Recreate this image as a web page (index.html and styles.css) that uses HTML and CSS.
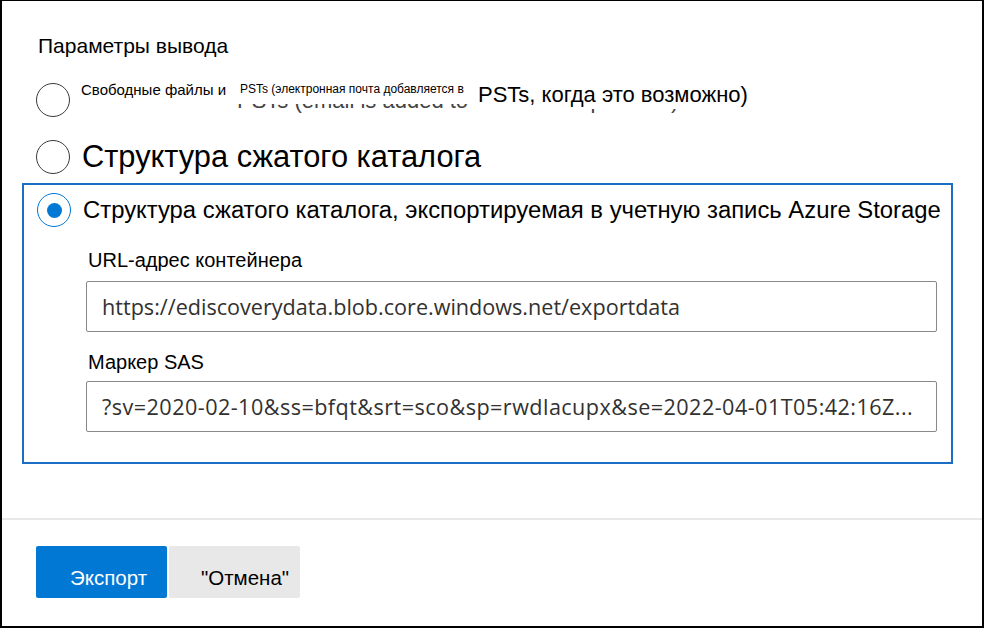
FILE: index.html
```html
<!DOCTYPE html>
<html lang="ru">
<head>
<meta charset="utf-8">
<title>Параметры вывода</title>
<link rel="stylesheet" href="styles.css">
</head>
<body>
<div class="dialog">
  <div class="content">
    <div class="heading">Параметры вывода</div>

    <div class="option opt1">
      <span class="radio"></span>
      <div class="opt1-label">
        <span class="t-small">Свободные файлы и</span>
        <span class="ghost">PSTs (email is added to PSTs when possible)</span>
        <span class="cover cover-a">PSTs (электронная почта добавляется в</span>
        <span class="cover cover-b">PSTs, когда это возможно)</span>
      </div>
    </div>

    <div class="option opt2">
      <span class="radio"></span>
      <span class="opt2-label">Структура сжатого каталога</span>
    </div>

    <div class="selected-box">
      <div class="option opt3">
        <span class="radio checked"></span>
        <span class="opt3-label">Структура сжатого каталога, экспортируемая в учетную запись Azure Storage</span>
      </div>
      <div class="fields">
        <div class="field-label">URL-адрес контейнера</div>
        <div class="input">https://ediscoverydata.blob.core.windows.net/exportdata</div>
        <div class="field-label second">Маркер SAS</div>
        <div class="input sas">?sv=2020-02-10&amp;ss=bfqt&amp;srt=sco&amp;sp=rwdlacupx&amp;se=2022-04-01T05:42:16Z...</div>
      </div>
    </div>
  </div>

  <div class="footer">
    <button class="btn primary">Экспорт</button>
    <button class="btn secondary">"Отмена"</button>
  </div>
</div>
</body>
</html>
```

FILE: styles.css
```css
html, body {
  margin: 0;
  padding: 0;
  background: #fff;
}

body {
  font-family: "Liberation Sans", Arial, sans-serif;
  color: #000;
}

.dialog {
  width: 984px;
  height: 628px;
  box-sizing: border-box;
  border: 2px solid #000;
  border-top-width: 1px;
  display: flex;
  flex-direction: column;
}

.content {
  padding: 32px 0 0 20px;
  flex: 1;
}

.heading {
  font-size: 21px;
  line-height: 26px;
  padding-left: 16px;
  height: 26px;
}

.option {
  display: flex;
  align-items: center;
  padding-left: 14px;
}

.radio {
  flex: none;
  width: 34px;
  height: 34px;
  box-sizing: border-box;
  border: 1.6px solid #3a3a3a;
  border-radius: 50%;
  background: #fff;
  display: flex;
  align-items: center;
  justify-content: center;
}

.radio.checked {
  border-color: #0078d4;
}

.radio.checked::after {
  content: "";
  width: 15px;
  height: 15px;
  border-radius: 50%;
  background: #0078d4;
}

/* option 1: overlapping translated labels */
.opt1 {
  align-items: flex-start;
  height: 44px;
  margin-top: 19px;
}

.opt1 .radio {
  margin-top: 5px;
}

.opt1-label {
  position: relative;
  margin-left: 11px;
  flex: 1;
  height: 44px;
}

.t-small {
  display: block;
  font-size: 15px;
  line-height: 18px;
  padding-top: 3px;
}

.ghost {
  position: absolute;
  left: 156px;
  top: 10px;
  font-size: 22px;
  line-height: 26px;
  color: #444;
  white-space: nowrap;
}

.cover {
  position: absolute;
  top: 0;
  background: #fff;
  white-space: nowrap;
  box-sizing: border-box;
}

.cover-a {
  left: 148px;
  width: 244px;
  height: 26px;
  padding: 4px 0 0 11px;
  font-size: 12px;
  line-height: 14px;
}

.cover-b {
  left: 392px;
  width: 307px;
  height: 31px;
  padding: 4px 0 0 5px;
  font-size: 22px;
  line-height: 26px;
}

/* option 2 */
.opt2 {
  margin-top: 18px;
  height: 34px;
}

.opt2-label {
  margin-left: 12px;
  font-size: 30.8px;
  line-height: 34px;
  white-space: nowrap;
}

/* selected option */
.selected-box {
  margin-top: 9px;
  width: 931px;
  height: 281px;
  box-sizing: border-box;
  border: 2px solid #1a6fc4;
  padding: 8px 0 0 0;
}

.selected-box .option {
  padding-left: 13px;
}

.opt3-label {
  margin-left: 12px;
  font-size: 23.85px;
  line-height: 28px;
  white-space: nowrap;
}

.fields {
  padding: 21px 0 0 62px;
}

.field-label {
  font-size: 20px;
  line-height: 24px;
  padding-left: 2px;
  height: 33px;
}

.field-label.second {
  margin-top: 18px;
  height: 31px;
}

.input {
  width: 851px;
  height: 51px;
  box-sizing: border-box;
  border: 1px solid #8a8886;
  border-radius: 2px;
  padding: 0 15px;
  display: flex;
  align-items: center;
  font-family: "Open Sans", "Noto Sans", sans-serif;
  font-size: 21.6px;
  color: #323130;
  white-space: nowrap;
  overflow: hidden;
}

.input.sas {
  letter-spacing: 0.45px;
}

/* footer */
.footer {
  border-top: 2px solid #e8e8e8;
  height: 108px;
  box-sizing: border-box;
  padding: 26px 0 0 34px;
  display: flex;
  align-items: flex-start;
  gap: 2px;
}

.btn {
  width: 131px;
  height: 52px;
  border: none;
  border-radius: 2px;
  font-family: "Liberation Sans", Arial, sans-serif;
  font-size: 20.5px;
  padding: 12px 0 0 0;
  text-align: left;
  cursor: pointer;
}

.btn.primary {
  background: #0078d4;
  color: #fff;
  padding-left: 34px;
}

.btn.secondary {
  background: #e8e8e8;
  color: #000;
  padding-left: 32px;
}
```
